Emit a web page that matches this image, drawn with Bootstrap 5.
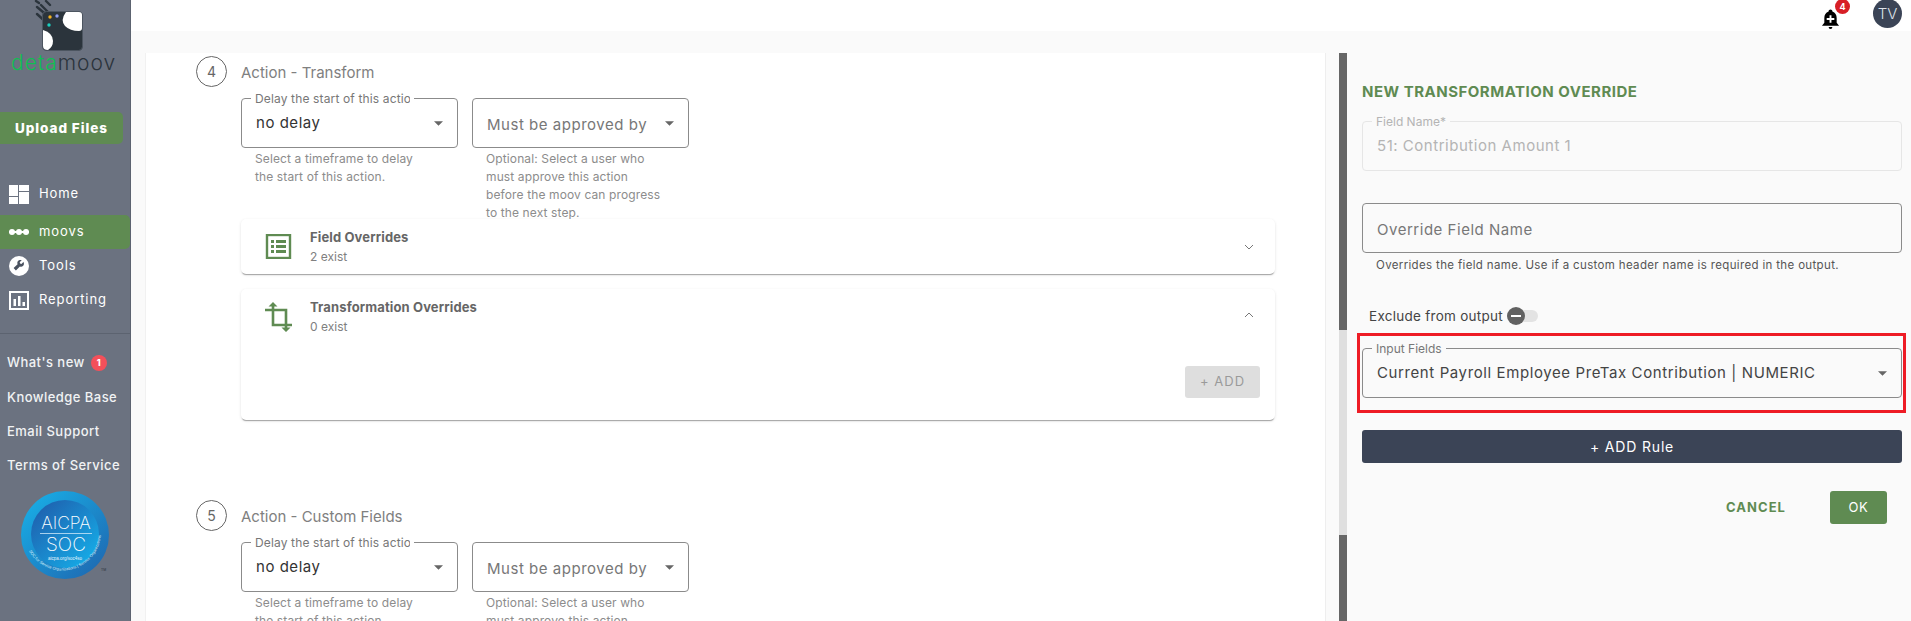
<!DOCTYPE html>
<html lang="en"><head><meta charset="utf-8"><title>Detamoov</title>
<link href="https://cdn.jsdelivr.net/npm/bootstrap@5.3.0/dist/css/bootstrap.min.css" rel="stylesheet">
<style>
html,body{height:621px;overflow:hidden}
body{font-family:Inter,"Open Sans",sans-serif;font-size:13px;color:#555;background:#fafafa}
.dm-side{width:131px;height:621px;background:#6b7280;border-right:1px solid #5c6370;flex:none;color:#fff}
.dm-logo{height:74px;margin-bottom:38px;display:block}
.dm-upload{width:123px;height:32px;background:#5f8b52;border:0;color:#fff;font-weight:800;font-size:13.5px;letter-spacing:.07em;border-radius:0 5px 5px 0;padding:0}
.dm-nav{margin-top:33px}
.dm-item{height:34px;padding-left:9px;gap:10px;font-size:13px;letter-spacing:.07em;font-weight:400}
.dm-item svg{width:20px;flex:none}
.dm-first{margin-bottom:4px}
.dm-active{background:#5f8b52;border-radius:0 5px 5px 0;width:130px}
.dm-rule{border-top:1px solid #5c6370;margin-top:16px;padding-top:12px}
.dm-link{height:34.3px;padding-left:7px;font-size:13px;font-weight:500;letter-spacing:.035em;gap:6px;white-space:nowrap;color:#f1f2f4}
.dm-new{width:16px;height:16px;background:#f4505a;border-radius:50%;font-size:9px;font-weight:800;letter-spacing:0;justify-content:center;color:#fff}
.dm-soc{display:block;margin:8px 0 0 21px}
.dm-top{height:31px;background:#fff;padding-right:9px}
.dm-bell{width:40px;height:31px;margin-right:22px}
.dm-bellicon{display:block;margin:8px 0 0 10px}
.dm-count{position:absolute;left:24px;top:-1px;width:15px;height:15px;background:#d71f26;border-radius:50%;color:#fff;font-size:9px;font-weight:700;text-align:center;line-height:15px}
.dm-avatar{width:29px;height:29px;background:#3b4456;border-radius:50%;color:#dfe3ea;font-size:15px;font-weight:300;line-height:29px;text-align:center;margin-top:-1px}
.dm-body{height:590px;padding:22px 0 0 14px;overflow:hidden}
.dm-sheet{width:1181px;height:568px;background:#fff;border-right:1px solid #eee;border-left:1px solid #f1f1f1;padding:3px 50px 0 50px;flex:none;overflow:hidden}
.dm-step{height:31px;margin-bottom:11px}
.dm-num{width:31px;height:31px;border:1px solid #666;border-radius:50%;font-size:14px;color:#666;flex:none;justify-content:center;margin-right:14px}
.dm-title{font-size:15px;color:#808080;padding-top:3px}
.dm-gap{padding-left:45px}
.dm-pair{gap:14px}
.dm-box{width:217px}
.dm-field{position:relative}
.dm-legend{position:absolute;left:10px;top:-6px;padding:0 4px;background:#fff;font-size:12px;line-height:14px;color:#777;z-index:1}
.dm-clip{display:block;max-width:155px;overflow:hidden;white-space:nowrap;letter-spacing:.012em}
.dm-field .form-select,.dm-field .form-control{height:50px;border:1px solid #8b8b8b;border-radius:4px;padding:0 36px 0 14px;font-size:15px;letter-spacing:.035em;color:#333;box-shadow:none;background-color:transparent}
.dm-field .form-select{background-image:url("data:image/svg+xml,%3Csvg xmlns='http://www.w3.org/2000/svg' viewBox='0 0 10 5'%3E%3Cpath d='M0 0h10L5 5z' fill='%23666'/%3E%3C/svg%3E");background-size:9px 5px;background-position:right 14px center}
.dm-field .dm-muted{color:#777;padding-top:4px}
.dm-help{height:71px;padding:2px 14px 0;font-size:12px;line-height:18px;color:#8c8c8c;letter-spacing:.01em;white-space:nowrap}
.dm-card{position:relative;border:0;border-radius:5px;background:#fff;box-shadow:0 2px 1px -1px rgba(0,0,0,.3),0 1px 3px 0 rgba(0,0,0,.12);margin-bottom:15px;width:1034px}
.dm-head{height:55px;padding:0 21px 0 24px}
.dm-ic{width:27px;margin-right:18px;flex:none}
.dm-name{font-size:13px;font-weight:700;color:#666;line-height:20px;letter-spacing:.01em}
.dm-sub{font-size:12px;color:#808080;line-height:20px}
.dm-up{margin-top:-4px}
.dm-add{height:32px;width:75px;background:#dedede;color:#9a9a9a;border:0;font-size:13px;letter-spacing:.08em;padding:0;border-radius:3px}
.dm-foot{padding:22px 15px 22px 0;height:76px}
.dm-next{margin-top:80px}
.dm-bar{width:8px;margin-left:13px;height:568px;flex:none;background:#dfdfdf}
.dm-thumb{height:277px;background:#666}
.dm-thumb2{height:100px;margin-top:205px;background:#666}
.dm-panel{width:564px;padding:31px 9px 0 15px;flex:none}
.dm-heading{height:16px;line-height:16px;font-size:15px;font-weight:700;color:#5f8b52;margin:0 0 21px;letter-spacing:.5px}
.dm-panel .dm-legend{background:#fafafa}
.dm-off .form-control{border-color:#e6e6e6;color:#b4b4b4;background-image:none;padding-bottom:2px}
.dm-off .dm-legend{color:#b4b4b4}
.dm-field .dm-plain{padding-top:2px;color:#777}
.dm-plain::placeholder{color:#777;opacity:1}
.dm-hint{font-size:11.5px;color:#555;padding:5px 0 0 14px;line-height:14px;letter-spacing:.03em}
.dm-exclude{margin:35px 0 0 7px;height:18px;font-size:13.5px;color:#444;gap:4px;letter-spacing:.02em}
.dm-red{border:3px solid #ee1c25;margin:8px -4px 0 -5px;padding:12px 1px 12px 2px}
.dm-red .form-select{color:#444;letter-spacing:.04em}
.dm-rulebtn{width:540px;height:33px;background:#3b4456;color:#fff;border:0;border-radius:3px;margin-top:17px;font-size:14px;letter-spacing:.06em;display:block}
.dm-actions{margin-top:28px;padding-right:15px;height:33px}
.dm-cancel{background:none;border:0;font-weight:700;font-size:13px;letter-spacing:.08em;color:#5f8b52;margin-right:44px;padding:0}
.dm-ok{width:57px;height:33px;background:#5f8b52;color:#fff;border:0;border-radius:3px;font-size:13px;letter-spacing:.05em;padding:0}
</style></head>
<body class="d-flex">
<aside class="dm-side">
 <svg class="dm-logo" width="131" height="74" viewBox="0 0 131 74">
  <path d="M36 1l3 2M46 1l4 4M41 5l9 9M37 7l12 10M37 14l11 10" stroke="#2b343c" stroke-width="2.400" stroke-linecap="round" fill="none"/>
  <rect x="42.500" y="11.500" width="40" height="39" rx="4" fill="#2b343c" stroke="#4c5560"/>
  <path d="M66 12h13q3 0 3 3v13q0 3-3 3-9 0-14-5-5-6 1-14z" fill="#fff"/>
  <path d="M43 30q10 3 10 11 0 6-5 9-5 0-5-4z" fill="#fff"/>
  <circle cx="50" cy="17" r="1.700" fill="#f2b01e"/><circle cx="57" cy="16" r="1.700" fill="#8f9df0"/><circle cx="49" cy="25" r="1.700" fill="#19d0c0"/>
  <text x="11" y="70" font-family="Inter,sans-serif" font-size="21" font-weight="300" letter-spacing="1"><tspan fill="#0fbf52">deta</tspan><tspan fill="#2b343c">moov</tspan></text>
 </svg>
 <button type="button" class="btn dm-upload">Upload Files</button>
 <div class="dm-nav">
  <div class="d-flex align-items-center dm-item dm-first"><svg height="19" viewBox="0 0 20 19" fill="#fff"><rect width="9" height="11"/><rect x="10" width="10" height="6"/><rect y="12" width="9" height="7"/><rect x="10" y="7" width="10" height="12"/></svg>Home</div>
  <div class="d-flex align-items-center dm-item dm-active"><svg height="8" viewBox="0 0 20 8" fill="#fff"><rect y="3" width="20" height="2"/><circle cx="3" cy="4" r="3"/><circle cx="10" cy="4" r="3"/><circle cx="17" cy="4" r="3"/></svg>moovs</div>
  <div class="d-flex align-items-center dm-item"><svg height="20" viewBox="0 0 20 20"><circle cx="10" cy="10" r="10" fill="#fff"/><path d="M14.600 5.800l-2.200 2.100-1.300-.4-.4-1.300 2.100-2.100c-1.500-.5-3.200-.1-4 1.200-.6 1-.6 2-.2 3l-4 3.800 2.300 2.400 4-4c1 .4 2.200.3 3-.4 1.200-1 1.300-2.700.7-3.800z" fill="#4a5260"/></svg>Tools</div>
  <div class="d-flex align-items-center dm-item"><svg height="19" viewBox="0 0 20 19"><rect x="1" y="1" width="18" height="17" fill="none" stroke="#fff" stroke-width="2"/><path d="M4.500 8h2.500v7H4.500zM9 5h2.500v10H9zM13.500 11H16v4h-2.500z" fill="#fff"/></svg>Reporting</div>
 </div>
 <div class="dm-rule">
  <div class="d-flex align-items-center dm-link">What's new <span class="d-flex align-items-center dm-new">1</span></div>
  <div class="d-flex align-items-center dm-link">Knowledge Base</div>
  <div class="d-flex align-items-center dm-link">Email Support</div>
  <div class="d-flex align-items-center dm-link">Terms of Service</div>
 </div>
 <svg class="dm-soc" width="92" height="90" viewBox="0 0 92 90">
  <defs><linearGradient id="g1" x1="0" y1="0" x2="1" y2="1"><stop offset="0" stop-color="#18b3ea"/><stop offset="1" stop-color="#1f63ad"/></linearGradient>
  <linearGradient id="g2" x1="0" y1="0" x2="1" y2="1"><stop offset="0" stop-color="#2058a8"/><stop offset="1" stop-color="#14b5ee"/></linearGradient>
  <path id="arc" d="M8 60A38.500 38.500 0 0 0 80 42"/></defs>
  <circle cx="44" cy="44" r="44" fill="url(#g1)"/><circle cx="44" cy="43" r="34" fill="url(#g2)"/>
  <text x="45" y="38" text-anchor="middle" fill="#fff" font-family="Inter,sans-serif" font-weight="200" font-size="17.500">AICPA</text>
  <rect x="19" y="42" width="52" height=".8" fill="#cde8f8"/>
  <text x="45" y="60" text-anchor="middle" fill="#fff" font-family="Inter,sans-serif" font-weight="200" font-size="19">SOC</text>
  <text x="44" y="69" text-anchor="middle" fill="#e6f4fb" font-family="Liberation Sans,sans-serif" font-size="4.500">aicpa.org/soc4so</text>
  <text fill="#d5eefa" font-family="Liberation Sans,sans-serif" font-size="4"><textPath href="#arc">SOC for Service Organizations | Service Organizations</textPath></text>
  <text x="80" y="80" fill="#2b343c" font-family="Liberation Sans,sans-serif" font-size="3.500">TM</text>
 </svg>
</aside>
<div class="flex-grow-1">
 <header class="d-flex justify-content-end dm-top">
  <div class="position-relative dm-bell">
   <svg width="19" height="23" viewBox="0 0 20 23" class="dm-bellicon"><path d="M10 1c1 0 2 .8 2 2 3 1 4.500 3.500 4.500 7v5l2.500 3H1l2.500-3v-5c0-3.500 1.500-6 4.500-7 0-1.200 1-2 2-2z" fill="#000"/><path d="M8 19.500h4a2 2 0 0 1-4 0z" fill="#000"/><path d="M9 7h2v3h3v2h-3v3H9v-3H6v-2h3z" fill="#fff"/></svg>
   <span class="dm-count">4</span>
  </div>
  <div class="dm-avatar">TV</div>
 </header>
 <main class="d-flex dm-body">
  <section class="dm-sheet">
   <div class="d-flex align-items-center dm-step"><span class="d-flex align-items-center dm-num">4</span><span class="dm-title">Action - Transform</span></div>
   <div class="dm-gap">
    <div class="d-flex dm-pair">
     <div class="dm-box"><div class="dm-field"><span class="dm-legend"><span class="dm-clip">Delay the start of this action</span></span><select class="form-select"><option>no delay</option></select></div><div class="dm-help">Select a timeframe to delay<br>the start of this action.</div></div>
     <div class="dm-box"><div class="dm-field"><select class="form-select dm-muted"><option>Must be approved by</option></select></div><div class="dm-help">Optional: Select a user who<br>must approve this action<br>before the moov can progress<br>to the next step.</div></div>
    </div>
    <div class="card dm-card"><div class="d-flex align-items-center dm-head">
      <svg class="dm-ic" height="25" viewBox="0 0 27 25"><rect x="2" y="1" width="23" height="23" fill="none" stroke="#5f8b52" stroke-width="2.400"/><path d="M6 6h3v3H6zM11 6h10v3H11zM6 11h3v3H6zM11 11h10v3H11zM6 16h3v3H6zM11 16h10v3H11z" fill="#5f8b52"/></svg>
      <div class="flex-grow-1"><div class="dm-name">Field Overrides</div><div class="dm-sub">2 exist</div></div>
      <svg width="10" height="6" viewBox="0 0 10 6"><path d="M1 1l4 4 4-4" fill="none" stroke="#777"/></svg>
    </div></div>
    <div class="card dm-card"><div class="d-flex align-items-center dm-head">
      <svg class="dm-ic" height="30" viewBox="0 0 27 30"><path d="M8 3v20h19M0 8h21v19" fill="none" stroke="#5f8b52" stroke-width="2.600"/><path d="M8 0l4.500 4.500h-9zM21 30l-4.500-4.500h9z" fill="#5f8b52"/></svg>
      <div class="flex-grow-1"><div class="dm-name">Transformation Overrides</div><div class="dm-sub">0 exist</div></div>
      <svg class="dm-up" width="10" height="6" viewBox="0 0 10 6"><path d="M1 5l4-4 4 4" fill="none" stroke="#777"/></svg>
     </div>
     <div class="d-flex justify-content-end dm-foot"><button type="button" class="btn dm-add">+ ADD</button></div>
    </div>
   </div>
   <div class="d-flex align-items-center dm-step dm-next"><span class="d-flex align-items-center dm-num">5</span><span class="dm-title">Action - Custom Fields</span></div>
   <div class="dm-gap">
    <div class="d-flex dm-pair">
     <div class="dm-box"><div class="dm-field"><span class="dm-legend"><span class="dm-clip">Delay the start of this action</span></span><select class="form-select"><option>no delay</option></select></div><div class="dm-help">Select a timeframe to delay<br>the start of this action.</div></div>
     <div class="dm-box"><div class="dm-field"><select class="form-select dm-muted"><option>Must be approved by</option></select></div><div class="dm-help">Optional: Select a user who<br>must approve this action<br>before the moov can progress<br>to the next step.</div></div>
    </div>
   </div>
  </section>
  <div class="dm-bar"><div class="dm-thumb"></div><div class="dm-thumb2"></div></div>
  <section class="dm-panel">
   <h2 class="dm-heading">NEW TRANSFORMATION OVERRIDE</h2>
   <div class="dm-field dm-off"><span class="dm-legend">Field Name*</span><input class="form-control" disabled value="51: Contribution Amount 1"></div>
   <div class="dm-field mt-4 pt-2"><input class="form-control dm-plain" placeholder="Override Field Name"></div>
   <div class="dm-hint">Overrides the field name. Use if a custom header name is required in the output.</div>
   <div class="d-flex align-items-center dm-exclude">Exclude from output
    <svg width="31" height="18" viewBox="0 0 31 18"><rect x="3" y="3" width="28" height="12" rx="6" fill="#e3e3e3"/><circle cx="9" cy="9" r="9" fill="#616161"/><rect x="4" y="8" width="10" height="2" fill="#fff"/></svg>
   </div>
   <div class="dm-red"><div class="dm-field"><span class="dm-legend">Input Fields</span><select class="form-select"><option>Current Payroll Employee PreTax Contribution | NUMERIC</option></select></div></div>
   <button type="button" class="btn dm-rulebtn">+ ADD Rule</button>
   <div class="d-flex justify-content-end align-items-center dm-actions"><button type="button" class="btn dm-cancel">CANCEL</button><button type="button" class="btn dm-ok">OK</button></div>
  </section>
 </main>
</div>
</body></html>
